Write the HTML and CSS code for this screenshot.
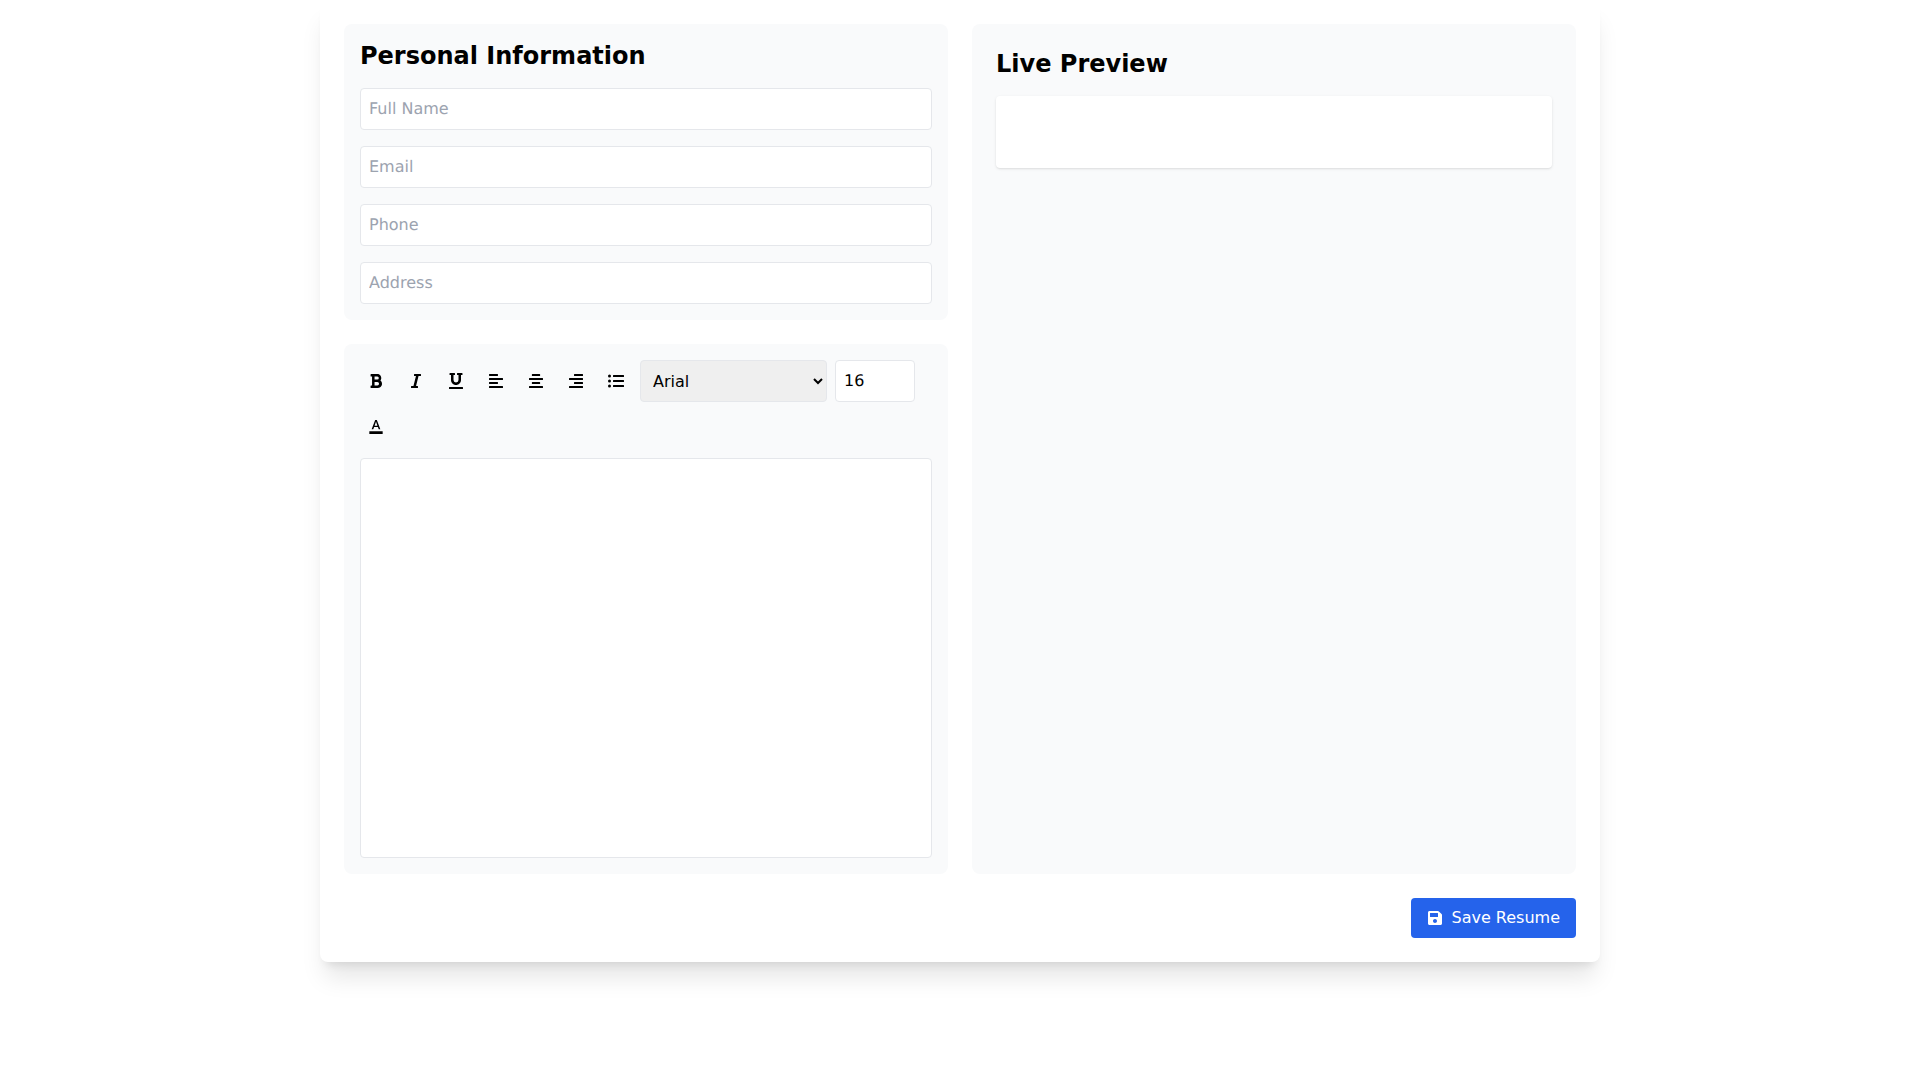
FILE: index.html
```html
<!DOCTYPE html>
<html lang="en">
<head>
<meta charset="utf-8">
<title>Resume Builder</title>
<link rel="stylesheet" href="styles.css">
</head>
<body>
<main class="card">
  <div class="columns">
    <div class="left">
      <section class="panel info">
        <h2 class="title">Personal Information</h2>
        <input class="field" type="text" placeholder="Full Name">
        <input class="field" type="text" placeholder="Email">
        <input class="field" type="text" placeholder="Phone">
        <input class="field" type="text" placeholder="Address">
      </section>
      <section class="panel editor">
        <div class="toolbar">
          <button class="tool"><svg class="icon" width="16" height="16" viewBox="0 0 384 512"><path d="M333.49 238a122 122 0 0 0 27-65.21C367.87 96.49 308 32 233.42 32H34a16 16 0 0 0-16 16v48a16 16 0 0 0 16 16h31.87v288H34a16 16 0 0 0-16 16v48a16 16 0 0 0 16 16h209.32c70.8 0 134.14-51.75 141-122.4 4.74-48.45-16.39-92.06-50.83-119.6zM145.66 112h87.76a48 48 0 0 1 0 96h-87.76zm87.76 288h-87.76V288h87.76a56 56 0 0 1 0 112z"/></svg></button>
          <button class="tool"><svg class="icon" width="16" height="16" viewBox="0 0 320 512"><path d="M320 48v32a16 16 0 0 1-16 16h-62.76l-80 320H208a16 16 0 0 1 16 16v32a16 16 0 0 1-16 16H16a16 16 0 0 1-16-16v-32a16 16 0 0 1 16-16h62.76l80-320H112a16 16 0 0 1-16-16V48a16 16 0 0 1 16-16h192a16 16 0 0 1 16 16z"/></svg></button>
          <button class="tool"><svg class="icon" width="16" height="16" viewBox="0 0 448 512"><path d="M32 64h32v160c0 88.22 71.78 160 160 160s160-71.78 160-160V64h32a16 16 0 0 0 16-16V16a16 16 0 0 0-16-16H272a16 16 0 0 0-16 16v32a16 16 0 0 0 16 16h32v160a80 80 0 0 1-160 0V64h32a16 16 0 0 0 16-16V16a16 16 0 0 0-16-16H32a16 16 0 0 0-16 16v32a16 16 0 0 0 16 16zm400 384H16a16 16 0 0 0-16 16v32a16 16 0 0 0 16 16h416a16 16 0 0 0 16-16v-32a16 16 0 0 0-16-16z"/></svg></button>
          <button class="tool"><svg class="icon" width="16" height="16" viewBox="0 0 448 512"><path d="M12.83 352h262.34A12.82 12.82 0 0 0 288 339.17v-38.34A12.82 12.82 0 0 0 275.17 288H12.83A12.82 12.82 0 0 0 0 300.83v38.34A12.82 12.82 0 0 0 12.83 352zm0-256h262.34A12.82 12.82 0 0 0 288 83.17V44.83A12.82 12.82 0 0 0 275.17 32H12.83A12.82 12.82 0 0 0 0 44.83v38.34A12.82 12.82 0 0 0 12.83 96zM432 160H16a16 16 0 0 0-16 16v32a16 16 0 0 0 16 16h416a16 16 0 0 0 16-16v-32a16 16 0 0 0-16-16zm0 256H16a16 16 0 0 0-16 16v32a16 16 0 0 0 16 16h416a16 16 0 0 0 16-16v-32a16 16 0 0 0-16-16z"/></svg></button>
          <button class="tool"><svg class="icon" width="16" height="16" viewBox="0 0 448 512"><path d="M108 32h232a16 16 0 0 1 16 16v32a16 16 0 0 1-16 16H108a16 16 0 0 1-16-16V48a16 16 0 0 1 16-16zM16 160h416a16 16 0 0 1 16 16v32a16 16 0 0 1-16 16H16a16 16 0 0 1-16-16v-32a16 16 0 0 1 16-16zM108 288h232a16 16 0 0 1 16 16v32a16 16 0 0 1-16 16H108a16 16 0 0 1-16-16v-32a16 16 0 0 1 16-16zM16 416h416a16 16 0 0 1 16 16v32a16 16 0 0 1-16 16H16a16 16 0 0 1-16-16v-32a16 16 0 0 1 16-16z"/></svg></button>
          <button class="tool"><svg class="icon" width="16" height="16" viewBox="0 0 448 512"><path d="M176 32h256a16 16 0 0 1 16 16v32a16 16 0 0 1-16 16H176a16 16 0 0 1-16-16V48a16 16 0 0 1 16-16zM16 160h416a16 16 0 0 1 16 16v32a16 16 0 0 1-16 16H16a16 16 0 0 1-16-16V176a16 16 0 0 1 16-16zM176 288h256a16 16 0 0 1 16 16v32a16 16 0 0 1-16 16H176a16 16 0 0 1-16-16v-32a16 16 0 0 1 16-16zM16 416h416a16 16 0 0 1 16 16v32a16 16 0 0 1-16 16H16a16 16 0 0 1-16-16v-32a16 16 0 0 1 16-16z"/></svg></button>
          <button class="tool"><svg class="icon" width="16" height="16" viewBox="0 0 512 512"><path d="M48 48a48 48 0 1 0 48 48 48 48 0 0 0-48-48zm0 160a48 48 0 1 0 48 48 48 48 0 0 0-48-48zm0 160a48 48 0 1 0 48 48 48 48 0 0 0-48-48zm448 16H176a16 16 0 0 0-16 16v32a16 16 0 0 0 16 16h320a16 16 0 0 0 16-16v-32a16 16 0 0 0-16-16zm0-320H176a16 16 0 0 0-16 16v32a16 16 0 0 0 16 16h320a16 16 0 0 0 16-16V80a16 16 0 0 0-16-16zm0 160H176a16 16 0 0 0-16 16v32a16 16 0 0 0 16 16h320a16 16 0 0 0 16-16v-32a16 16 0 0 0-16-16z"/></svg></button>
          <select class="font-select"><option>Arial</option></select>
          <input class="size-input" type="number" value="16">
          <button class="tool"><svg class="icon" width="16" height="16" viewBox="0 0 24 24"><path d="M2 20h20v4H2v-4zm3.49-3h2.42l1.27-3.58h5.65L16.09 17h2.42L13.25 3h-2.5L5.49 17zm4.42-5.42 2.03-5.79h.12l2.03 5.79H9.91z"/></svg></button>
        </div>
        <div class="content"></div>
      </section>
    </div>
    <section class="panel preview">
      <h2 class="title">Live Preview</h2>
      <div class="preview-box"></div>
    </section>
  </div>
  <div class="actions">
    <button class="save"><svg class="save-icon" width="16" height="16" viewBox="0 0 448 512"><path d="M433.941 129.941l-83.882-83.882A48 48 0 0 0 316.118 32H48C21.49 32 0 53.49 0 80v352c0 26.51 21.49 48 48 48h352c26.51 0 48-21.49 48-48V163.882a48 48 0 0 0-14.059-33.941zM224 416c-35.346 0-64-28.654-64-64 0-35.346 28.654-64 64-64s64 28.654 64 64c0 35.346-28.654 64-64 64zm96-304.52V212c0 6.627-5.373 12-12 12H76c-6.627 0-12-5.373-12-12V108c0-6.627 5.373-12 12-12h228.52c3.183 0 6.235 1.264 8.485 3.515l3.48 3.48A11.996 11.996 0 0 1 320 111.48z"/></svg>Save Resume</button>
  </div>
</main>
</body>
</html>
```
FILE: styles.css
```css
* { box-sizing: border-box; }
html, body { margin: 0; height: 100%; }
body {
  background: #fff;
  font-family: "DejaVu Sans", sans-serif;
  font-size: 16px;
  line-height: 24px;
}
.card {
  width: 1280px;
  margin: 0 auto;
  padding: 24px;
  background: #fff;
  border-radius: 8px;
  box-shadow: 0 20px 25px -5px rgba(0,0,0,.1), 0 8px 10px -6px rgba(0,0,0,.1);
}
.columns {
  display: grid;
  grid-template-columns: 1fr 1fr;
  gap: 24px;
}
.left { display: flex; flex-direction: column; gap: 24px; }
.panel { background: #f9fafb; border-radius: 8px; }
.info { padding: 16px; display: flex; flex-direction: column; gap: 16px; }
.title { margin: 0; font-size: 24px; line-height: 32px; font-weight: 700; color: #000; }
.field {
  display: block;
  width: 100%;
  height: 42px;
  padding: 7px 8px 9px;
  border: 1px solid #e5e7eb;
  border-radius: 4px;
  background: #fff;
  font: 16px "DejaVu Sans", sans-serif;
  line-height: normal;
  text-rendering: geometricPrecision;
  outline: none;
}
.field::placeholder { color: #9ca3af; opacity: 1; }
.editor { padding: 16px; }
.toolbar {
  display: flex;
  flex-wrap: wrap;
  align-items: center;
  gap: 8px;
  margin-bottom: 16px;
}
.tool {
  display: flex;
  align-items: center;
  justify-content: center;
  width: 32px;
  height: 32px;
  padding: 0;
  border: 0;
  border-radius: 4px;
  background: transparent;
}
.icon { display: block; fill: #000; }
.font-select {
  width: 187px;
  height: 42px;
  padding: 8px 6px 8px 8px;
  border: 1px solid #e5e7eb;
  border-radius: 4px;
  background-color: #efefef;
  color: #000;
  font: 16px/24px "DejaVu Sans", sans-serif;
}
.size-input {
  width: 80px;
  height: 42px;
  padding: 7px 8px 9px;
  border: 1px solid #e5e7eb;
  border-radius: 4px;
  background: #fff;
  color: #000;
  font: 16px "DejaVu Sans", sans-serif;
  line-height: normal;
  text-rendering: geometricPrecision;
}
.content {
  height: 400px;
  background: #fff;
  border: 1px solid #e5e7eb;
  border-radius: 4px;
}
.preview { padding: 24px; }
.preview .title { margin-bottom: 16px; }
.preview-box {
  height: 72px;
  background: #fff;
  border-radius: 4px;
  box-shadow: 0 1px 3px 0 rgba(0,0,0,.1), 0 1px 2px -1px rgba(0,0,0,.1);
}
.actions { display: flex; justify-content: flex-end; margin-top: 24px; }
.save {
  display: flex;
  align-items: center;
  gap: 8px;
  height: 40px;
  padding: 0 16px;
  border: 0;
  border-radius: 4px;
  background: #2563eb;
  color: #fff;
  font: 16px/24px "DejaVu Sans", sans-serif;
}
.save-icon { display: block; fill: #fff; }
```
